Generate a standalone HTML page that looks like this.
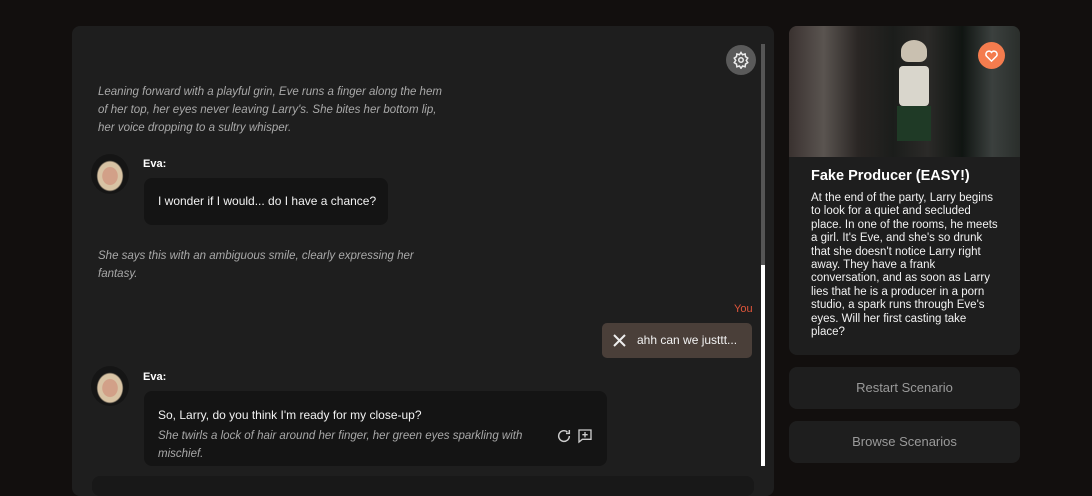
<!DOCTYPE html>
<html><head><style>
*{box-sizing:border-box;margin:0;padding:0}
body{width:1092px;height:485px;background:#120f0e;font-family:"Liberation Sans",sans-serif;position:relative;overflow:hidden;color:#eee}
.chat{position:absolute;left:72px;top:26px;width:702px;height:470px;background:#1e1e1e;border-radius:8px}
.it{position:absolute;font-style:italic;color:#a9a9a9;font-size:11.5px;line-height:18px}
.av{position:absolute;width:38px;height:40px;border-radius:50%;background:radial-gradient(ellipse at 50% 55%,#d2a088 0 28%,#d8c3a4 30% 45%,#151515 50%)}
.nm{position:absolute;font-size:11px;font-weight:bold;color:#fff}
.bub{position:absolute;background:#141414;border-radius:8px;font-size:12px;color:#f2f2f2}
.btn{position:absolute;left:789px;width:231px;height:42px;background:#1e1e1e;border-radius:8px;color:#9a9a9a;font-size:13px;text-align:center;line-height:42px}
</style></head><body>
<div class="chat"></div>
<div style="position:absolute;left:726px;top:45px;width:30px;height:30px;border-radius:50%;background:#5a5a5a"></div>
<svg style="position:absolute;left:732px;top:51px" width="18" height="18" viewBox="0 0 24 24" fill="none" stroke="#eee" stroke-width="2"><circle cx="12" cy="12" r="3"/><path d="M12 2l2 3 3.5-1 .5 3.5 3 2-2 3 2 3-3 2-.5 3.5-3.5-1-2 3-2-3-3.5 1-.5-3.5-3-2 2-3-2-3 3-2 .5-3.5 3.5 1z"/></svg>
<div style="position:absolute;left:761px;top:44px;width:4px;height:422px;background:#555"></div>
<div style="position:absolute;left:761px;top:265px;width:4px;height:201px;background:#fff"></div>
<div class="it" style="left:98px;top:83px;width:345px">Leaning forward with a playful grin, Eve runs a finger along the hem of her top, her eyes never leaving Larry's. She bites her bottom lip, her voice dropping to a sultry whisper.</div>
<div class="av" style="left:91px;top:154px"></div>
<div class="nm" style="left:143px;top:158px">Eva:</div>
<div class="bub" style="left:144px;top:178px;width:244px;height:47px;line-height:47px;padding-left:14px">I wonder if I would... do I have a chance?</div>
<div class="it" style="left:98px;top:247px;width:340px">She says this with an ambiguous smile, clearly expressing her fantasy.</div>
<div style="position:absolute;left:734px;top:303px;font-size:11px;color:#e0553a">You</div>
<div style="position:absolute;left:602px;top:323px;width:150px;height:35px;background:#4a3f39;border-radius:5px;font-size:12px;color:#f2f2f2;line-height:35px;padding-left:35px">ahh can we justtt...</div>
<svg style="position:absolute;left:613px;top:334px" width="13" height="13" viewBox="0 0 13 13" stroke="#eee" stroke-width="2"><path d="M1 1L12 12M12 1L1 12"/></svg>
<div class="av" style="left:91px;top:366px"></div>
<div class="nm" style="left:143px;top:371px">Eva:</div>
<div class="bub" style="left:144px;top:391px;width:463px;height:75px"></div>
<div style="position:absolute;left:158px;top:408px;font-size:12px;color:#f2f2f2">So, Larry, do you think I'm ready for my close-up?</div>
<div class="it" style="left:158px;top:427px;width:400px">She twirls a lock of hair around her finger, her green eyes sparkling with mischief.</div>
<svg style="position:absolute;left:556px;top:428px" width="16" height="16" viewBox="0 0 24 24" fill="none" stroke="#ccc" stroke-width="2.2"><path d="M20 12a8 8 0 1 1-3-6.2M20 3v5h-5"/></svg>
<svg style="position:absolute;left:577px;top:428px" width="16" height="16" viewBox="0 0 24 24" fill="none" stroke="#ccc" stroke-width="2"><path d="M3 3h18v14H8l-5 4z M12 6v8M8 10h8"/></svg>
<div style="position:absolute;left:92px;top:476px;width:662px;height:20px;background:#181818;border-radius:8px"></div>
<div style="position:absolute;left:789px;top:26px;width:231px;height:329px;background:#1e1e1e;border-radius:8px;overflow:hidden">
<div style="height:131px;background:linear-gradient(90deg,#3a3230 0,#5a5450 15%,#2a2624 30%,#1b1d1b 45%,#2b2a28 60%,#101512 75%,#3b403e 88%,#2a2e2b 100%);position:relative">
<div style="position:absolute;left:112px;top:14px;width:26px;height:22px;border-radius:50% 50% 30% 30%;background:#c9c0b0"></div>
<div style="position:absolute;left:110px;top:40px;width:30px;height:40px;background:#d9d6cc;border-radius:4px"></div>
<div style="position:absolute;left:108px;top:80px;width:34px;height:35px;background:#1f3a26"></div>
<div style="position:absolute;left:189px;top:16px;width:27px;height:27px;border-radius:50%;background:#f47c4e"></div>
<svg style="position:absolute;left:195px;top:22px" width="15" height="15" viewBox="0 0 24 24" fill="none" stroke="#fff" stroke-width="2.4"><path d="M12 21l-8-8a5 5 0 0 1 8-6 5 5 0 0 1 8 6z"/></svg>
</div>
<div style="position:absolute;left:22px;top:142px;font-size:14.5px;font-weight:bold;color:#fff">Fake Producer (EASY!)</div>
<div style="position:absolute;left:22px;top:166px;width:190px;font-size:11.5px;line-height:13.4px;color:#f2f2f2">At the end of the party, Larry begins to look for a quiet and secluded place. In one of the rooms, he meets a girl. It's Eve, and she's so drunk that she doesn't notice Larry right away. They have a frank conversation, and as soon as Larry lies that he is a producer in a porn studio, a spark runs through Eve's eyes. Will her first casting take place?</div>
</div>
<div class="btn" style="top:367px">Restart Scenario</div>
<div class="btn" style="top:421px">Browse Scenarios</div>
</body></html>
